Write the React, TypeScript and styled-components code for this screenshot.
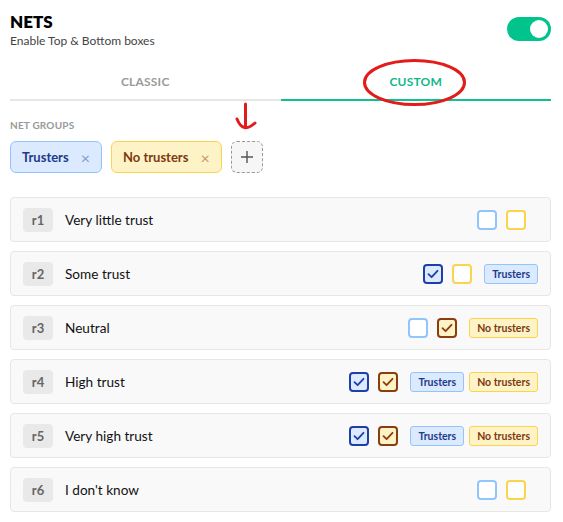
import React from 'react';
import styled, { createGlobalStyle } from 'styled-components';

const GlobalStyle = createGlobalStyle`
  body {
    margin: 0;
    background: #ffffff;
    font-family: Lato, "Open Sans", sans-serif;
    color: #1a1a1a;
  }
`;

type Group = 'blue' | 'yellow';

const palette = {
  blue: { bg: '#dbeafe', border: '#93c5fd', text: '#1e3a8a', strong: '#1e3fa8', x: '#7f9ccf' },
  yellow: { bg: '#fef3c7', border: '#fcd34d', text: '#7c3a10', strong: '#8b3d0f', x: '#c59a6a' },
};

const Page = styled.div`
  position: relative;
  padding: 0 12px 0 10px;
`;

const Header = styled.div`
  display: flex;
  justify-content: space-between;
  align-items: center;
  padding-top: 10px;
  height: 40px;
`;

const Title = styled.h1`
  margin: 0;
  font-size: 17px;
  font-weight: 800;
  line-height: 20px;
  color: #000;
`;

const Subtitle = styled.div`
  font-size: 12px;
  color: #444;
  margin-top: 1px;
`;

const Toggle = styled.div`
  width: 44px;
  height: 24px;
  border-radius: 12px;
  background: #00c48c;
  position: relative;
  margin-top: -2px;
  &::after {
    content: '';
    position: absolute;
    right: 3px;
    top: 3px;
    width: 18px;
    height: 18px;
    border-radius: 50%;
    background: #fff;
  }
`;

const Tabs = styled.div`
  display: grid;
  grid-template-columns: 1fr 1fr;
  margin-top: 10px;
`;

const Tab = styled.div<{ $active?: boolean }>`
  height: 41px;
  padding-top: 3px;
  box-sizing: border-box;
  display: flex;
  align-items: center;
  justify-content: center;
  font-size: 12px;
  font-weight: 700;
  letter-spacing: 0.2px;
  color: ${p => (p.$active ? '#10b88a' : '#9a9a9a')};
  border-bottom: 2px solid ${p => (p.$active ? '#10c08e' : '#e6e6e6')};
`;

const SectionLabel = styled.div`
  font-size: 10px;
  font-weight: 700;
  color: #999;
  letter-spacing: 0.2px;
  margin-top: 18px;
`;

const Chips = styled.div`
  display: flex;
  gap: 9px;
  margin-top: 10px;
`;

const Chip = styled.div<{ $group: Group }>`
  height: 32px;
  box-sizing: border-box;
  display: flex;
  align-items: center;
  gap: 12px;
  padding: 0 11px;
  border-radius: 6px;
  font-size: 13px;
  font-weight: 700;
  background: ${p => palette[p.$group].bg};
  border: 1px solid ${p => palette[p.$group].border};
  color: ${p => palette[p.$group].text};
`;

const ChipX = styled.span<{ $group: Group }>`
  color: ${p => palette[p.$group].x};
  font-weight: 400;
  font-size: 16px;
`;

const AddButton = styled.div`
  width: 32px;
  height: 32px;
  box-sizing: border-box;
  border: 1px dashed #999;
  border-radius: 6px;
  background: #f6f6f6;
  display: flex;
  align-items: center;
  justify-content: center;
  color: #555;
`;

const Rows = styled.div`
  display: flex;
  flex-direction: column;
  gap: 9px;
  margin-top: 24px;
`;

const Row = styled.div`
  height: 45px;
  box-sizing: border-box;
  display: flex;
  align-items: center;
  gap: 12px;
  padding: 0 12px 0 12px;
  background: #f9f9f9;
  border: 1px solid #e6e6e6;
  border-radius: 4px;
`;

const Code = styled.div`
  width: 30px;
  height: 24px;
  border-radius: 4px;
  background: #e9e9e9;
  color: #666;
  font-size: 13px;
  font-weight: 700;
  display: flex;
  align-items: center;
  justify-content: center;
`;

const Label = styled.div`
  flex: 1;
  font-size: 13.6px;
  color: #111;
`;

const Boxes = styled.div`
  display: flex;
  gap: 9px;
`;

const Box = styled.div<{ $group: Group; $checked?: boolean }>`
  width: 20px;
  height: 20px;
  box-sizing: border-box;
  border-radius: 4px;
  border: 2px solid ${p => (p.$checked ? palette[p.$group].strong : palette[p.$group].border)};
  background: ${p => (p.$checked ? palette[p.$group].bg : '#fff')};
  display: flex;
  align-items: center;
  justify-content: center;
  color: ${p => palette[p.$group].strong};
`;

const Tags = styled.div`
  display: flex;
  gap: 5px;
`;

const Tag = styled.div<{ $group: Group }>`
  height: 20px;
  box-sizing: border-box;
  padding: 0 7px;
  display: flex;
  align-items: center;
  border-radius: 3px;
  font-size: 10.5px;
  font-weight: 700;
  background: ${p => palette[p.$group].bg};
  border: 1px solid ${p => palette[p.$group].border};
  color: ${p => palette[p.$group].text};
`;

const Annotation = styled.svg`
  position: absolute;
  left: 0;
  top: 0;
  pointer-events: none;
`;

const Check = () => (
  <svg width="12" height="12" viewBox="0 0 12 12" fill="none">
    <path d="M1.5 6.2 L4.6 9.2 L10.5 2.8" stroke="currentColor" strokeWidth="1.8" strokeLinecap="round" strokeLinejoin="round" />
  </svg>
);

const rows = [
  { code: 'r1', label: 'Very little trust', blue: false, yellow: false },
  { code: 'r2', label: 'Some trust', blue: true, yellow: false },
  { code: 'r3', label: 'Neutral', blue: false, yellow: true },
  { code: 'r4', label: 'High trust', blue: true, yellow: true },
  { code: 'r5', label: 'Very high trust', blue: true, yellow: true },
  { code: 'r6', label: "I don't know", blue: false, yellow: false },
];

export default function App() {
  return (
    <Page>
      <GlobalStyle />
      <Header>
        <div>
          <Title>NETS</Title>
          <Subtitle>Enable Top &amp; Bottom boxes</Subtitle>
        </div>
        <Toggle />
      </Header>

      <Tabs>
        <Tab>CLASSIC</Tab>
        <Tab $active>CUSTOM</Tab>
      </Tabs>

      <SectionLabel>NET GROUPS</SectionLabel>
      <Chips>
        <Chip $group="blue">Trusters <ChipX $group="blue">×</ChipX></Chip>
        <Chip $group="yellow">No trusters <ChipX $group="yellow">×</ChipX></Chip>
        <AddButton>
          <svg width="14" height="14" viewBox="0 0 14 14">
            <path d="M7 1v12M1 7h12" stroke="#555" strokeWidth="1.4" />
          </svg>
        </AddButton>
      </Chips>

      <Rows>
        {rows.map(r => (
          <Row key={r.code}>
            <Code>{r.code}</Code>
            <Label>{r.label}</Label>
            <Boxes>
              <Box $group="blue" $checked={r.blue}>{r.blue && <Check />}</Box>
              <Box $group="yellow" $checked={r.yellow}>{r.yellow && <Check />}</Box>
            </Boxes>
            <Tags>
              {r.blue && <Tag $group="blue">Trusters</Tag>}
              {r.yellow && <Tag $group="yellow">No trusters</Tag>}
            </Tags>
          </Row>
        ))}
      </Rows>

      <Annotation width="563" height="140" viewBox="0 0 563 140">
        <ellipse cx="414.5" cy="82.5" rx="50" ry="22" fill="none" stroke="#e31b1b" strokeWidth="3" />
        <path d="M245.5 104 V127" stroke="#e31b1b" strokeWidth="3" strokeLinecap="round" fill="none" />
        <path d="M237 119 Q243 134 255 123" stroke="#e31b1b" strokeWidth="3" strokeLinecap="round" fill="none" />
      </Annotation>
    </Page>
  );
}
